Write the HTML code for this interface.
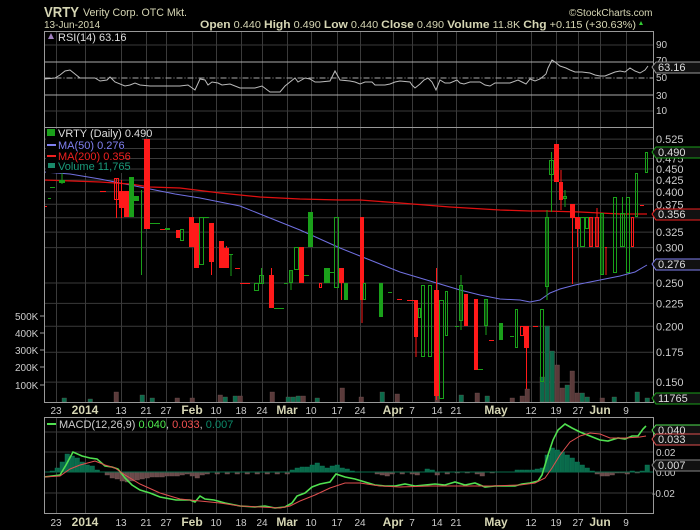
<!DOCTYPE html><html><head><style>
body{margin:0;background:#000;width:700px;height:530px;overflow:hidden}
svg{display:block}
text{font-family:"Liberation Sans",sans-serif}
</style></head><body>
<svg id="s" width="700" height="530" xmlns="http://www.w3.org/2000/svg">
<rect width="700" height="530" fill="#000"/>
<text x="44" y="17" fill="#d6d6b4" font-size="15" font-weight="bold" textLength="35" lengthAdjust="spacingAndGlyphs">VRTY</text>
<text x="83" y="16" fill="#d6d6b4" font-size="11" textLength="104" lengthAdjust="spacingAndGlyphs">Verity Corp. OTC Mkt.</text>
<text x="44" y="28" fill="#d6d6b4" font-size="10">13-Jun-2014</text>
<text x="569" y="16" fill="#d6d6b4" font-size="10">©StockCharts.com</text>
<text x="200" y="28" fill="#d6d6b4" font-size="10" textLength="436" lengthAdjust="spacingAndGlyphs"><tspan font-weight="bold" font-size="11">Open</tspan> 0.440 <tspan font-weight="bold" font-size="11">High</tspan> 0.490 <tspan font-weight="bold" font-size="11">Low</tspan> 0.440 <tspan font-weight="bold" font-size="11">Close</tspan> 0.490 <tspan font-weight="bold" font-size="11">Volume</tspan> 11.8K <tspan font-weight="bold" font-size="11">Chg</tspan> +0.115 (+30.63%)</text>
<polygon points="639,25 643,25 641,21" fill="#3c3"/>
<g id="g"></g>
</svg>
<script>
const g=document.getElementById('g');let h='';
const L=44.5,R=653.5;
const dates=[[56,'23'],[85,'2014',1],[121,'13'],[146,'21'],[166,'27'],[192,'Feb',1],[216,'10'],[241,'18'],[262,'24'],[287,'Mar',1],[311,'10'],[337,'17'],[360,'24'],[393,'Apr',1],[412,'7'],[437,'14'],[456,'21'],[496,'May',1],[531,'12'],[556,'19'],[578,'27'],[600,'Jun',1],[626,'9']];
function vgrid(t,b){dates.forEach(d=>{h+=`<line x1="${d[0]+.5}" y1="${t}" x2="${d[0]+.5}" y2="${b}" stroke="#3a3a3a"/>`});}
function hl(y,c,w){h+=`<line x1="${L}" y1="${y}" x2="${R}" y2="${y}" stroke="${c||'#3a3a3a'}" ${w||''}/>`}
function tx(x,y,s,c,fs,ex){h+=`<text x="${x}" y="${y}" fill="${c}" font-size="${fs||10}" ${ex||''}>${s}</text>`}
function box(x,y,s,c,tc){h+=`<polygon points="${x-4},${y} ${x},${y-5} ${x+45},${y-5} ${x+45},${y+6} ${x},${y+6}" fill="#111" stroke="${c}"/>`;tx(x+2,y+4,s,tc||'#ddd',11)}
function pl(p,c,w){h+=`<polyline points="${p.map(a=>a.join(',')).join(' ')}" fill="none" stroke="${c}" stroke-width="${w||1}"/>`}
vgrid(31,127);
[45,111].forEach(y=>hl(y));
hl(62,'#aaa');hl(95,'#aaa');hl(78,'#aaa','stroke-dasharray="6,2,1,2"');
[[90,48],[70,64],[50,81],[30,99],[10,114]].forEach(a=>tx(656,a[1],a[0],'#ccc',10));
pl([[44,79],[55,78],[60,75],[65,71],[70,70],[75,74],[80,78],[95,78],[100,81],[107,80],[110,77],[115,82],[125,86],[130,85],[135,83],[140,85],[150,86],[170,86],[180,86],[188,85],[195,90],[200,79],[205,80],[208,85],[212,82],[218,83],[222,85],[230,84],[240,88],[255,88],[262,86],[270,92],[280,92],[285,86],[295,78],[298,82],[305,78],[310,79],[315,82],[320,82],[330,81],[335,71],[340,80],[350,81],[355,82],[360,84],[365,82],[372,82],[375,85],[385,85],[390,84],[395,82],[400,81],[410,82],[412,85],[415,88],[420,84],[424,80],[428,78],[432,82],[436,90],[440,80],[445,83],[450,83],[457,80],[460,83],[464,84],[470,82],[480,82],[485,85],[490,86],[495,83],[500,83],[510,83],[518,80],[522,82],[526,84],[530,79],[535,81],[540,79],[546,74],[548,68],[552,60],[555,62],[560,66],[566,68],[570,70],[575,72],[582,72],[590,73],[595,75],[600,76],[605,76],[610,74],[615,72],[620,71],[625,72],[630,68],[635,71],[640,73],[645,70],[648,66]],'#bbb');
h+=`<rect x="${L}" y="31.5" width="609" height="96" fill="none" stroke="#999"/>`;
h+=`<polygon points="48,39 51,33 54,39" fill="#a080c0"/>`;
tx(58,41,'RSI(14) 63.16','#ddd',11);
box(656,67,'63.16','#999');
vgrid(128,402);
const P=p=>139+(-0.644-Math.log(p))*194;
[0.525,0.5,0.475,0.45,0.425,0.4,0.375,0.35,0.325,0.3,0.25,0.225,0.2,0.175,0.15].forEach(p=>hl(P(p).toFixed(1)));
[0.525,0.475,0.45,0.425,0.4,0.375,0.325,0.3,0.25,0.225,0.2,0.175,0.15].forEach(p=>tx(656,P(p)+4,p.toFixed(3),'#ccc',11));
[[316,'500K'],[333,'400K'],[350,'300K'],[367,'200K'],[385,'100K']].forEach(a=>{tx(15,a[0]+4,a[1],'#ccc',10);h+=`<line x1="40" y1="${a[0]}" x2="44" y2="${a[0]}" stroke="#999"/>`});
const vb=[[62,398,'#0a6a4a'],[88,399,'#0a6a4a'],[114,392,'#5a3a3a'],[140,395,'#0a6a4a'],[150,398,'#0a6a4a'],[175,398,'#5a3a3a'],[190,398,'#5a3a3a'],[218,395,'#5a3a3a'],[223,397,'#0a6a4a'],[233,396,'#0a6a4a'],[238,396,'#5a3a3a'],[270,392,'#5a3a3a'],[286,397,'#0a6a4a'],[291,397,'#0a6a4a'],[296,396,'#0a6a4a'],[301,396,'#5a3a3a'],[315,398,'#0a6a4a'],[340,388,'#5a3a3a'],[359,397,'#5a3a3a'],[380,392,'#0a6a4a'],[395,394,'#5a3a3a'],[435,395,'#5a3a3a'],[459,395,'#0a6a4a'],[475,393,'#5a3a3a'],[485,396,'#0a6a4a'],[510,398,'#5a3a3a'],[520,396,'#5a3a3a'],[525,389,'#5a3a3a'],[540,377,'#0a6a4a'],[545,326,'#0a6a4a'],[550,351,'#0a6a4a'],[555,365,'#5a3a3a'],[560,388,'#5a3a3a'],[565,385,'#0a6a4a'],[570,371,'#5a3a3a'],[575,393,'#5a3a3a'],[580,393,'#0a6a4a'],[585,397,'#0a6a4a'],[600,398,'#5a3a3a'],[612,397,'#0a6a4a'],[635,392,'#0a6a4a'],[645,398,'#0a6a4a']];
vb.forEach(v=>h+=`<rect x="${v[0]}" y="${v[1]}" width="4.5" height="${402-v[1]}" fill="${v[2]}" stroke="#7a5a5a" stroke-width=".3"/>`);
pl([[44,172],[70,174],[100,179],[125,184],[150,189],[175,194],[200,198],[240,206],[260,214],[280,222],[300,230],[320,239],[340,248],[360,256],[380,264],[400,272],[420,278],[440,284],[460,290],[480,295],[500,299],[520,300],[530,302],[540,300],[550,293],[560,289],[575,285],[590,282],[605,279],[620,276],[635,272],[647,265]],'#7070e0');
pl([[44,180],[100,182],[130,184],[150,187],[180,188],[220,193],[260,197],[300,199],[340,200],[360,200],[400,203],[450,207],[500,210],[530,211],[545,211],[580,212],[620,214],[647,214]],'#e01010',1.3);
const G='#1aa01a',Rr='#ff1a1a';
const C=[[59,65,180,183,G,1,172,184],[50,55,187,188,G,1],[48,51,198,199,G,1],[44,47,206,207,Rr,1],[100,106,191,192,Rr,1],[114,119,178,200,Rr,0,178,218],[119,124,191,208,Rr,1,180,218],[124,129,191,217,Rr,1],[129,134,177,217,G,1],[134,139,196,201,G,1],[141,142,190,275,G,1],[144,150,139,229,Rr,1],[150,160,223,224,G,1],[160,168,229,230,Rr,1],[165,170,228,230,G,1],[176,180,230,238,Rr,1,230,238],[180,184,229,241,G,0],[189,194,217,247,Rr,1],[194,199,223,268,Rr,1],[199,204,217,265,G,0],[204,209,217,218,G,1],[209,214,223,262,Rr,1,223,275],[219,224,241,268,Rr,1],[224,229,248,268,Rr,1,246,268],[229,233,254,255,G,1,254,276],[235,240,268,269,Rr,1],[240,250,283,284,Rr,1],[254,259,283,291,G,0],[259,264,275,284,G,0,268,284],[269,274,275,308,Rr,1,268,308],[274,284,308,309,G,1],[284,288,283,284,G,1],[289,293,270,283,G,0,270,290],[294,299,247,270,G,0],[299,304,247,283,Rr,1],[304,309,275,276,G,1],[308,313,212,247,G,1],[319,322,283,288,Rr,0],[324,330,268,283,G,1],[330,334,272,273,G,1],[334,339,217,288,G,0],[339,344,268,283,Rr,1,268,300],[344,348,283,300,G,1],[360,364,217,300,Rr,1,217,323],[363,366,283,300,G,0],[379,383,283,317,G,1],[388,392,292,293,G,1],[397,402,299,300,Rr,1],[407,414,300,301,Rr,1],[414,418,300,337,Rr,1,300,357],[418,421,308,318,G,0],[421,425,285,357,G,0],[428,432,285,357,G,0],[434,439,290,396,Rr,1,268,400],[439,444,300,399,G,0],[445,448,291,336,G,0],[455,459,326,327,G,1],[459,463,285,321,G,0,275,330],[464,468,294,326,Rr,1],[474,478,299,370,Rr,1],[478,483,369,370,G,1],[484,488,299,326,G,0,299,335],[489,494,340,341,Rr,1],[499,503,323,340,G,1],[510,514,336,337,G,1],[515,518,309,348,G,0],[520,524,326,336,Rr,0],[524,529,326,348,Rr,1,326,389],[533,538,326,327,Rr,1],[540,544,309,382,G,0],[545,549,217,287,G,0,210,300],[549,554,160,175,G,0,152,212],[554,559,144,182,Rr,1],[559,563,182,200,Rr,1,170,210],[563,567,196,199,G,0,190,207],[570,575,204,218,Rr,1,204,284],[575,580,217,229,Rr,1,217,247],[580,585,217,247,G,0],[585,589,217,229,G,0],[589,593,217,247,Rr,0,217,247],[595,599,217,247,Rr,0,208,247],[600,604,213,275,G,0,213,275],[605,607,247,248,Rr,1,247,275],[613,617,197,273,G,0],[620,625,213,247,G,0,197,247],[626,630,197,273,G,0],[631,634,217,247,Rr,0],[635,638,173,217,G,0],[640,644,205,206,Rr,1],[645,648,152,173,G,0]];
C.forEach(c=>{let [a,b,t,bo,col,f,wt,wb]=c;let m=(a+b)/2;if(wt)h+=`<line x1="${m}" y1="${wt}" x2="${m}" y2="${wb}" stroke="${col}"/>`;
if(f)h+=`<rect x="${a}" y="${t}" width="${b-a}" height="${Math.max(1,bo-t)}" fill="${col}"/>`;else h+=`<rect x="${a+.5}" y="${t+.5}" width="${b-a-1}" height="${bo-t-1}" fill="none" stroke="${col}"/>`});
h+=`<rect x="${L}" y="127.5" width="609" height="275" fill="none" stroke="#999"/>`;
h+=`<rect x="46" y="129" width="96" height="11" fill="#000"/><rect x="46" y="140" width="78" height="33" fill="#000"/>`;
h+=`<rect x="47" y="129" width="8" height="7" fill="${G}"/>`;tx(58,137,'VRTY (Daily) 0.490','#ddd',11);
h+=`<line x1="47" y1="145" x2="56" y2="145" stroke="#8080f0" stroke-width="2"/>`;tx(58,149,'MA(50) 0.276','#8080f0',11);
h+=`<line x1="47" y1="156" x2="56" y2="156" stroke="#f02020" stroke-width="2"/>`;tx(58,160,'MA(200) 0.356','#f02020',11);
h+=`<rect x="48" y="163" width="7" height="5" fill="#1a8a6a"/>`;tx(58,170,'Volume 11,765','#1a9a7a',11);
box(656,152,'0.490',G);box(656,214,'0.356','#f02020');box(656,264,'0.276','#8080f0');box(656,398,'11765',G);
function dates_(y){dates.forEach(d=>{tx(d[0],y,d[1],d[2]?'#d6d6b4':'#ccc',d[2]?12:10,'text-anchor="middle" '+(d[2]?'font-weight="bold"':''))});}
dates_(414);dates_(526);
vgrid(418,514);
[452,472,493].forEach(y=>hl(y));hl(432);
tx(656,456,'0.02','#ccc',10);tx(656,476,'0.00','#ccc',10);tx(652,497,'-0.02','#ccc',10);
const hist=[[50,471],[55,468],[60,462],[65,454],[70,456],[75,458],[80,462],[85,465],[90,466],[95,470],[100,472],[105,475],[110,478],[115,479],[120,481],[125,482],[130,481],[135,480],[140,479],[145,478],[150,477],[155,477],[160,477],[165,476],[170,476],[175,476],[180,475],[185,474],[190,476],[195,478],[200,475],[205,474],[215,474],[225,474],[235,474],[245,474],[255,474],[265,474],[275,474],[285,474],[290,470],[295,468],[300,467],[305,467],[310,465],[315,463],[320,466],[325,468],[330,466],[335,465],[340,468],[345,469],[350,471],[375,474],[380,475],[385,476],[390,474],[400,474],[410,474],[415,475],[425,469],[430,470],[435,475],[440,472],[445,474],[455,473],[465,473],[475,474],[480,476],[490,473],[500,472],[510,472],[515,470],[520,470],[525,470],[530,470],[535,469],[540,468],[545,455],[550,448],[555,450],[560,452],[565,455],[570,458],[575,462],[580,465],[585,468],[590,471],[595,474],[600,476],[605,476],[610,475],[615,473],[620,473],[625,474],[630,471],[635,473],[640,471],[645,465]];
hist.forEach(v=>{let y=v[1];let c=y<472?'#0a6a4a':'#6a4a4a';let t=Math.min(y,472),hh=Math.abs(y-472);if(hh>0)h+=`<rect x="${v[0]}" y="${t}" width="4.5" height="${hh}" fill="${c}" stroke="${y<472?'#0c8060':'#7a5a5a'}" stroke-width=".4"/>`});
hl(472,'#0a6a4a');
pl([[44,477],[60,475],[66,465],[73,452],[82,456],[90,458],[97,459],[105,466],[112,467],[118,469],[125,478],[132,485],[140,490],[150,493],[160,497],[176,500],[190,500],[195,502],[200,496],[205,499],[214,500],[225,503],[240,506],[255,507],[265,506],[275,508],[285,507],[292,503],[297,496],[305,493],[312,487],[320,484],[330,482],[336,474],[345,477],[355,479],[365,482],[375,485],[385,486],[395,486],[405,484],[415,486],[425,485],[435,484],[445,485],[455,482],[465,485],[475,483],[485,487],[495,486],[505,486],[515,486],[522,484],[530,483],[538,481],[542,475],[548,455],[553,440],[558,430],[565,424],[572,428],[580,432],[590,436],[600,440],[608,441],[618,438],[625,439],[632,436],[638,436],[643,429],[646,426]],'#50e050',1.6);
pl([[44,477],[60,476],[70,469],[80,465],[95,461],[105,465],[115,468],[125,475],[140,484],[160,493],[180,499],[200,501],[220,503],[240,506],[260,507],[280,508],[290,506],[300,501],[315,495],[330,488],[345,483],[360,483],[380,486],[400,487],[430,486],[460,486],[490,486],[520,485],[535,483],[545,478],[552,468],[560,455],[570,442],[580,436],[590,433],[600,434],[610,438],[625,438],[640,437],[646,436]],'#e05050',1);
h+=`<rect x="${L}" y="417.5" width="609" height="96" fill="none" stroke="#999"/>`;
h+=`<line x1="47" y1="424" x2="56" y2="424" stroke="#50e050" stroke-width="2"/>`;
tx(59,428,'MACD(12,26,9) <tspan fill="#50f050">0.040</tspan><tspan fill="#ccc">, </tspan><tspan fill="#f05050">0.033</tspan><tspan fill="#ccc">, </tspan><tspan fill="#0c8a6a">0.007</tspan>','#ccc',11);
box(656,430,'0.040','#50e050');box(656,439,'0.033','#e05050');box(656,465,'0.007','#888');
g.innerHTML=h;
</script></body></html>
